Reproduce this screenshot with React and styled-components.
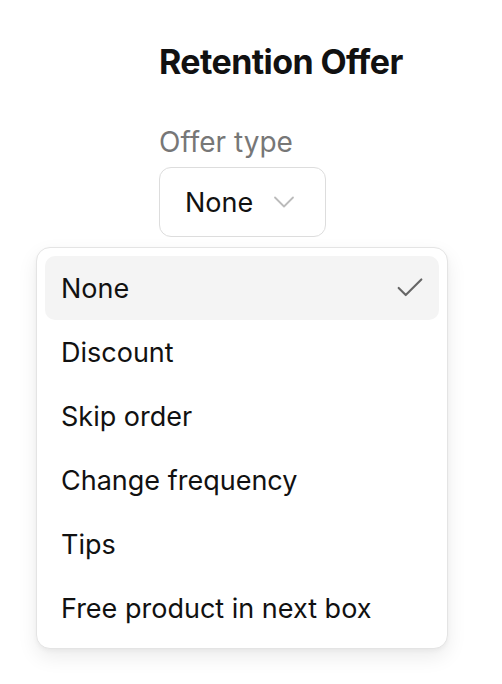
import React, { useState } from "react";
import styled, { createGlobalStyle } from "styled-components";
import { Check, ChevronDown } from "lucide-react";

const GlobalStyle = createGlobalStyle`
  body {
    margin: 0;
    background: #ffffff;
    font-family: Inter, "Noto Sans", "Liberation Sans", sans-serif;
    color: #111111;
  }
`;

const Page = styled.div`
  padding: 39px 0 0 159px;
  min-height: 684px;
  box-sizing: border-box;
`;

const Title = styled.h1`
  margin: 0 0 40px;
  font-size: 34px;
  line-height: 46px;
  font-weight: 700;
  letter-spacing: -0.6px;
  color: #111111;
`;

const Label = styled.div`
  font-size: 28px;
  line-height: 34px;
  color: #777777;
  margin-bottom: 8px;
`;

const SelectWrap = styled.div`
  position: relative;
  display: inline-block;
`;

const Trigger = styled.button`
  display: flex;
  align-items: center;
  gap: 13px;
  height: 70px;
  padding: 0 23px 0 25px;
  border: 1px solid #dddddd;
  border-radius: 12px;
  background: #ffffff;
  font-family: inherit;
  font-size: 27px;
  color: #111111;
  cursor: pointer;
`;

const Menu = styled.ul`
  position: absolute;
  top: 80px;
  left: -123px;
  width: 412px;
  margin: 0;
  padding: 8px;
  box-sizing: border-box;
  list-style: none;
  background: #ffffff;
  border: 1px solid #e4e4e4;
  border-radius: 14px;
  box-shadow: 0 8px 20px rgba(0, 0, 0, 0.08), 0 2px 4px rgba(0, 0, 0, 0.04);
`;

const Item = styled.li`
  display: flex;
  align-items: center;
  justify-content: space-between;
  height: 64px;
  padding: 0 12px 0 16px;
  border-radius: 10px;
  font-size: 27px;
  color: #111111;
  background: ${(p) => (p.$active ? "#f4f4f4" : "transparent")};
  cursor: pointer;
`;

const options = [
  "None",
  "Discount",
  "Skip order",
  "Change frequency",
  "Tips",
  "Free product in next box",
];

const App = () => {
  const [value, setValue] = useState("None");

  return (
    <>
      <GlobalStyle />
      <Page>
        <Title>Retention Offer</Title>
        <Label>Offer type</Label>
        <SelectWrap>
          <Trigger>
            {value}
            <ChevronDown size={36} strokeWidth={1.2} color="#bbbbbb" />
          </Trigger>
          <Menu>
            {options.map((opt) => (
              <Item
                key={opt}
                $active={opt === value}
                onClick={() => setValue(opt)}
              >
                {opt}
                {opt === value && (
                  <Check size={34} strokeWidth={1.5} color="#666666" />
                )}
              </Item>
            ))}
          </Menu>
        </SelectWrap>
      </Page>
    </>
  );
};

export default App;
